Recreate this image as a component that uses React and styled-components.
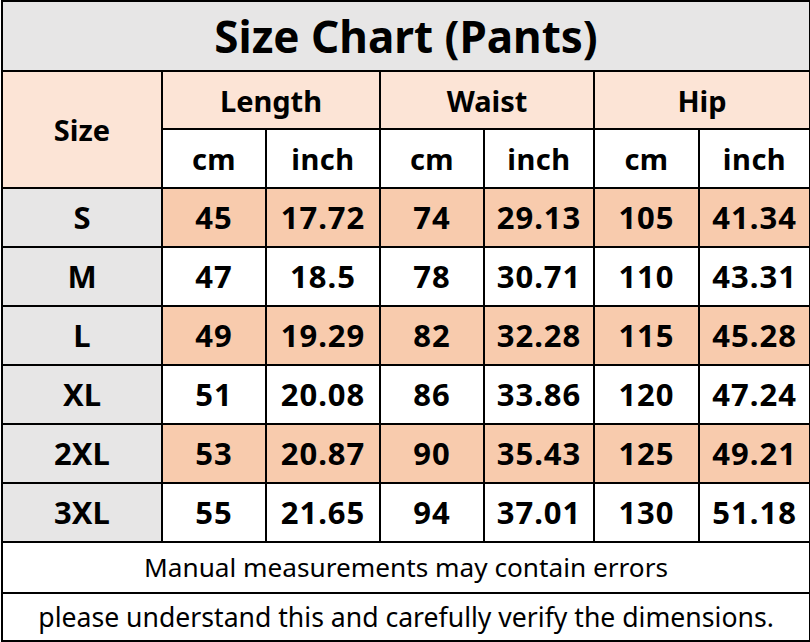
import React from 'react'
import styled, { createGlobalStyle } from 'styled-components'

const rows = [
    ['S', '45', '17.72', '74', '29.13', '105', '41.34'],
    ['M', '47', '18.5', '78', '30.71', '110', '43.31'],
    ['L', '49', '19.29', '82', '32.28', '115', '45.28'],
    ['XL', '51', '20.08', '86', '33.86', '120', '47.24'],
    ['2XL', '53', '20.87', '90', '35.43', '125', '49.21'],
    ['3XL', '55', '21.65', '94', '37.01', '130', '51.18'],
]

const widths = [160, 104, 114, 104, 110, 105, 111]

// row heights are line-to-line; the cell height loses the 2px border
const App = () => {
    return (
        <>
            <GlobalStyle />
            <Chart>
                <colgroup>
                    {widths.map((w, i) => (
                        <col key={i} style={{ width: w }} />
                    ))}
                </colgroup>
                <tbody>
                    <tr>
                        <Title colSpan={7} $h={68}>Size Chart (Pants)</Title>
                    </tr>
                    <tr>
                        <Head rowSpan={2}>Size</Head>
                        <Head colSpan={2} $h={56}>Length</Head>
                        <Head colSpan={2}>Waist</Head>
                        <Head colSpan={2}>Hip</Head>
                    </tr>
                    <tr>
                        {['cm', 'inch', 'cm', 'inch', 'cm', 'inch'].map((u, i) => (
                            <Unit key={i} $h={57}>{u}</Unit>
                        ))}
                    </tr>
                    {rows.map((r, i) => (
                        <tr key={r[0]}>
                            <SizeCell $h={57}>{r[0]}</SizeCell>
                            {r.slice(1).map((v, j) => (
                                <Value key={j} $shade={i % 2 === 0}>{v}</Value>
                            ))}
                        </tr>
                    ))}
                    <tr>
                        <Note colSpan={7} $h={49} $size={26.2}>Manual measurements may contain errors</Note>
                    </tr>
                    <tr>
                        <Note colSpan={7} $h={46} $size={26.6}>please understand this and carefully verify the dimensions.</Note>
                    </tr>
                </tbody>
            </Chart>
        </>
    )
}

const GlobalStyle = createGlobalStyle`
    body {
        margin: 0;
        background: #ffffff;
        font-family: 'Noto Sans', 'Open Sans', sans-serif;
    }
`

const Chart = styled.table`
    width: 808px;
    margin-left: 1px;
    border-collapse: collapse;
    table-layout: fixed;
    color: #000;

    td {
        border: 2px solid #000;
        padding: 0;
        text-align: center;
        vertical-align: middle;
        font-weight: 700;
        line-height: 1;
        white-space: nowrap;
    }
`

const Title = styled.td`
    height: ${(p) => p.$h}px;
    background: #e7e6e6;
    font-size: 44px;
`

const Head = styled.td`
    height: ${(p) => p.$h || 0}px;
    background: #fce4d6;
    font-size: 29px;
`

const Unit = styled.td`
    height: ${(p) => p.$h}px;
    background: #ffffff;
    font-size: 29px;
    letter-spacing: 0.5px;
`

const SizeCell = styled.td`
    height: ${(p) => p.$h}px;
    background: #e7e6e6;
    font-size: 31px;
`

const Value = styled.td`
    background: ${(p) => (p.$shade ? '#f8cbad' : '#ffffff')};
    font-size: 31px;
    letter-spacing: 1px;
`

const Note = styled.td`
    height: ${(p) => p.$h}px;
    background: #ffffff;
    font-size: ${(p) => p.$size}px;
    && {
        font-weight: 400;
    }
`

export default App
